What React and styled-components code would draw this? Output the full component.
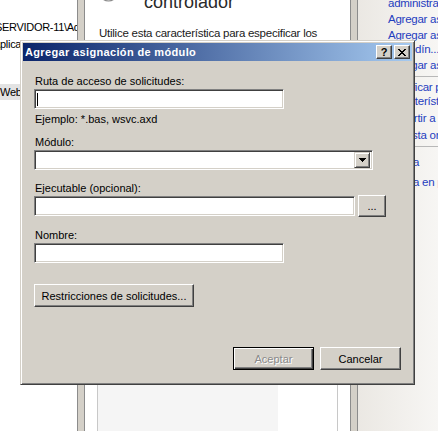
import React from 'react';
import styled, { createGlobalStyle } from 'styled-components';

const Global = createGlobalStyle`
  html, body { margin: 0; padding: 0; background: #fff; overflow: hidden; }
  body { font-family: "Liberation Sans", Arial, sans-serif; }
`;

const Screen = styled.div`
  position: relative;
  width: 438px;
  height: 431px;
  overflow: hidden;
  display: flex;
  font-family: "Liberation Sans", Arial, sans-serif;
`;

/* ---------- background: IIS manager ---------- */

const TreePane = styled.div`
  width: 77px;
  flex: none;
  background: #fff;
  overflow: hidden;
  font-size: 11px;
  letter-spacing: -0.3px;
  color: #000;
  white-space: nowrap;
`;

const TreeRow = styled.div`
  height: 16px;
  line-height: 16px;
  margin-top: ${p => p.$mt || 0}px;
  text-indent: ${p => p.$indent || 0}px;
  background: ${p => (p.$selected ? '#e3e3e3' : 'transparent')};
`;

const Splitter = styled.div`
  width: 8px;
  flex: none;
  box-sizing: border-box;
  border-left: 1px solid #8c8c8c;
  border-right: 1px solid #8c8c8c;
  background: #d4d0c8;
`;

const MainPane = styled.div`
  width: 265px;
  flex: none;
  box-sizing: border-box;
  background: #fff;
  padding: 0 12px;
  display: flex;
  flex-direction: column;
`;

const FeatureHeader = styled.div`
  display: flex;
  align-items: flex-end;
  margin-top: -31px;
  height: 44px;
`;

const FeatureIcon = styled.svg`
  width: 47px;
  height: 44px;
  flex: none;
`;

const FeatureTitle = styled.h1`
  margin: 0;
  font-size: 18px;
  font-weight: normal;
  line-height: 22px;
  color: #2a2a2a;
  white-space: nowrap;
`;

const Intro = styled.p`
  margin: 13px 0 0 2px;
  font-size: 11.5px;
  letter-spacing: -0.25px;
  line-height: 15px;
  color: #1a1a1a;
`;

const ListBox = styled.div`
  flex: 1;
  margin-top: 20px;
  border: 1px solid #c8c8c8;
  border-bottom: none;
  display: flex;
`;

const SortedColumn = styled.div`
  width: 180px;
  background: #f5f5f5;
`;

const ActionsPane = styled.div`
  flex: 1;
  overflow: hidden;
  background: linear-gradient(to right, #ebe8e3, #f7f6f4);
  padding-left: 30px;
  white-space: nowrap;
  font-size: 11.5px;
  letter-spacing: -0.25px;
  color: #1f3dbf;
`;

const ActionGroup = styled.div`
  display: flex;
  flex-direction: column;
  gap: ${p => p.$gap}px;
  margin-top: ${p => p.$mt || 0}px;
  margin-left: -30px;
  padding: ${p => p.$pt || 0}px 0 ${p => p.$pb || 0}px 30px;
  border-bottom: ${p => (p.$sep ? '1px solid #b8b8b8' : 'none')};
`;

const ActionLink = styled.div`
  line-height: 14px;
`;

/* ---------- dialog ---------- */

const Dialog = styled.div`
  position: absolute;
  left: 20px;
  top: 40px;
  width: 395px;
  height: 345px;
  box-sizing: border-box;
  background: #d4d0c8;
  border: 1px solid;
  border-color: #d4d0c8 #404040 #404040 #d4d0c8;
  box-shadow: inset 1px 1px #fff, inset -1px -1px #808080;
  padding: 2px;
  display: flex;
  flex-direction: column;
  font-family: "Liberation Sans", Tahoma, sans-serif;
  font-size: 11px;
  color: #000;
`;

const TitleBar = styled.div`
  height: 18px;
  flex: none;
  display: flex;
  align-items: center;
  padding: 0 2px;
  background: linear-gradient(to right, #0a246a, #a6caf0);
`;

const Title = styled.span`
  flex: 1;
  color: #fff;
  font-weight: bold;
  font-size: 11px;
  letter-spacing: 0.35px;
  white-space: nowrap;
`;

const CaptionButton = styled.div`
  width: 16px;
  height: 14px;
  box-sizing: border-box;
  margin-left: ${p => p.$gap || 0}px;
  background: #d4d0c8;
  border: 1px solid;
  border-color: #fff #404040 #404040 #fff;
  box-shadow: inset -1px -1px #808080;
  display: flex;
  align-items: center;
  justify-content: center;
  font-weight: bold;
  font-size: 11px;
  line-height: 11px;
  color: #000;
`;

const Body = styled.div`
  flex: 1;
  display: flex;
  flex-direction: column;
  align-items: flex-start;
  padding: 14px 11px 12px 11px;
`;

const Label = styled.div`
  line-height: 13px;
  margin: ${p => p.$mt || 0}px 0 1px 1px;
  white-space: nowrap;
`;

const Hint = styled(Label)`
  margin-bottom: 0;
`;

const TextBox = styled.div`
  width: ${p => p.$w}px;
  height: 20px;
  flex: none;
  box-sizing: border-box;
  background: #fff;
  border: 1px solid;
  border-color: #808080 #fff #fff #808080;
  box-shadow: inset 1px 1px #404040, inset -1px -1px #d4d0c8;
  padding: 2px;
  display: flex;
  align-items: center;
`;

const Caret = styled.span`
  width: 1px;
  height: 13px;
  background: #000;
`;

const DropButton = styled.div`
  margin-left: auto;
  width: 16px;
  height: 16px;
  box-sizing: border-box;
  background: #d4d0c8;
  border: 1px solid;
  border-color: #d4d0c8 #404040 #404040 #d4d0c8;
  box-shadow: inset 1px 1px #fff, inset -1px -1px #808080;
  display: flex;
  align-items: center;
  justify-content: center;
`;

const InputRow = styled.div`
  display: flex;
  align-items: flex-start;
  height: 20px;
`;

const PushButton = styled.button`
  box-sizing: border-box;
  width: ${p => p.$w}px;
  height: ${p => p.$h || 23}px;
  margin: ${p => p.$m || '0'};
  padding: 0;
  background: #d4d0c8;
  font-family: "Liberation Sans", Tahoma, sans-serif;
  font-size: 11px;
  color: #000;
  border: 1px solid;
  border-color: #fff #404040 #404040 #fff;
  box-shadow: inset -1px -1px #808080;
  white-space: nowrap;
  cursor: default;
`;

const DefaultButton = styled(PushButton)`
  border: 1px solid #000;
  box-shadow: inset 1px 1px #fff, inset -1px -1px #404040, inset -2px -2px #808080;
  &:disabled {
    color: #8a8a8a;
    text-shadow: 1px 1px #fff;
  }
`;

const Footer = styled.div`
  margin-top: auto;
  align-self: flex-end;
  display: flex;
  gap: 6px;
`;

const CloseGlyph = () => (
  <svg width="8" height="7" viewBox="0 0 8 7" shapeRendering="crispEdges">
    {[0, 1, 2, 3, 4, 5, 6].map(i => (
      <React.Fragment key={i}>
        <rect x={i} y={i} width="2" height="1" fill="#000" />
        <rect x={6 - i} y={i} width="2" height="1" fill="#000" />
      </React.Fragment>
    ))}
  </svg>
);

const DownArrow = () => (
  <svg width="7" height="4" viewBox="0 0 7 4" shapeRendering="crispEdges">
    <polygon points="0,0 7,0 3.5,4" fill="#000" />
  </svg>
);

export default function App() {
  return (
    <Screen>
      <Global />
      <TreePane>
        <TreeRow $mt={19} $indent={-5}>SERVIDOR-11\Administrador</TreeRow>
        <TreeRow $mt={1} $indent={-7}>Aplicaciones</TreeRow>
        <TreeRow $mt={32} $selected>Web predeterminado</TreeRow>
      </TreePane>
      <Splitter />
      <MainPane>
        <FeatureHeader>
          <FeatureIcon viewBox="0 0 47 44">
            <circle cx="11.5" cy="23" r="9" fill="#e8e8e8" stroke="#8a8a8a" strokeWidth="1.2" />
          </FeatureIcon>
          <FeatureTitle>
            Asignaciones de
            <br />
            controlador
          </FeatureTitle>
        </FeatureHeader>
        <Intro>
          Utilice esta característica para especificar los recursos, como archivos DLL y
          código administrado, que controlan las respuestas para tipos de solicitud
          específicos.
        </Intro>
        <ListBox>
          <SortedColumn />
        </ListBox>
      </MainPane>
      <Splitter />
      <ActionsPane>
        <ActionGroup $gap={2} $mt={-18} $pb={4} $sep>
          <ActionLink>
            Agregar controlador
            <br />
            administrado...
          </ActionLink>
          <ActionLink>Agregar asignación de script...</ActionLink>
          <ActionLink>
            Agregar asignación de script
            <br />
            comodín...
          </ActionLink>
          <ActionLink>Agregar asignación de módulo...</ActionLink>
        </ActionGroup>
        <ActionGroup $gap={3} $pt={3} $pb={4} $sep>
          <ActionLink>
            Modificar permisos de
            <br />
            característica...
          </ActionLink>
          <ActionLink>Revertir a heredado</ActionLink>
          <ActionLink>Ver lista ordenada...</ActionLink>
        </ActionGroup>
        <ActionGroup $gap={6} $pt={8}>
          <ActionLink>Ayuda</ActionLink>
          <ActionLink>Ayuda en pantalla</ActionLink>
        </ActionGroup>
      </ActionsPane>

      <Dialog>
        <TitleBar>
          <Title>Agregar asignación de módulo</Title>
          <CaptionButton>?</CaptionButton>
          <CaptionButton $gap={2}>
            <CloseGlyph />
          </CaptionButton>
        </TitleBar>
        <Body>
          <Label>Ruta de acceso de solicitudes:</Label>
          <TextBox $w={250}>
            <Caret />
          </TextBox>
          <Hint $mt={4}>Ejemplo: *.bas, wsvc.axd</Hint>

          <Label $mt={10}>Módulo:</Label>
          <TextBox $w={339}>
            <DropButton>
              <DownArrow />
            </DropButton>
          </TextBox>

          <Label $mt={12}>Ejecutable (opcional):</Label>
          <InputRow>
            <TextBox $w={321} />
            <PushButton $w={28} $h={22} $m="-1px 0 0 3px">...</PushButton>
          </InputRow>

          <Label $mt={13}>Nombre:</Label>
          <TextBox $w={250} />

          <PushButton $w={160} $m="21px 0 0 0">Restricciones de solicitudes...</PushButton>

          <Footer>
            <DefaultButton $w={81} disabled>
              Aceptar
            </DefaultButton>
            <PushButton $w={81}>Cancelar</PushButton>
          </Footer>
        </Body>
      </Dialog>
    </Screen>
  );
}
